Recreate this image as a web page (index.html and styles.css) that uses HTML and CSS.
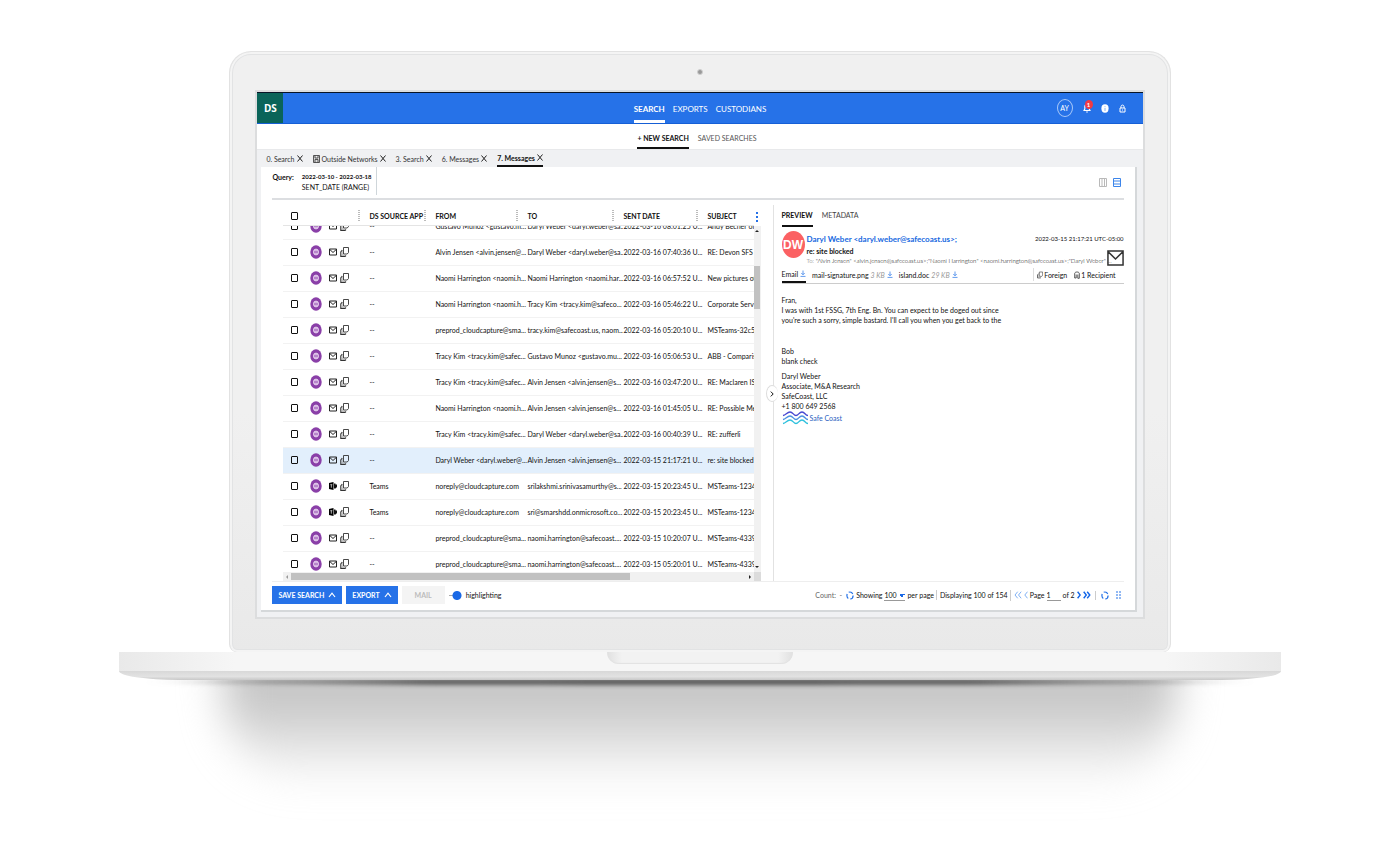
FILE: index.html
```html
<!DOCTYPE html>
<html lang="en">
<head>
<meta charset="utf-8">
<title>DS Search</title>
<link rel="stylesheet" href="styles.css">
</head>
<body>
<svg class="sprite" aria-hidden="true">
  <symbol id="i-x" viewBox="0 0 6 7"><path d="M.5 .5 5.5 6.5M5.5 .5.5 6.5" fill="none" stroke="#222" stroke-width="1"/></symbol>
  <symbol id="i-badge" viewBox="0 0 12 14"><ellipse cx="6" cy="7" rx="5.7" ry="6.7" fill="#8a3fa8"/><ellipse cx="6" cy="7" rx="2.6" ry="3" fill="#d5b3e2" stroke="#efdff5" stroke-width=".7"/><path d="M4 7h4" stroke="#8a3fa8" stroke-width=".8"/></symbol>
  <symbol id="i-mail" viewBox="0 0 18 16"><path d="M1 1h16v14H1zM1.500 2 9 9l7.500-7" fill="none" stroke="currentColor" stroke-width="1.600"/></symbol>
  <symbol id="i-smallmail" viewBox="0 0 8 8"><path d="M.5 1h7v6h-7zM.8 1.500 4 4.500l3.200-3" fill="none" stroke="#222" stroke-width="1"/></symbol>
  <symbol id="i-teams" viewBox="0 0 8 8"><path d="M0 1 4.500 0v8L0 7z" fill="#000"/><path d="M5 1.500h1.500v1H8V5L6.500 6.500H5z" fill="#111"/><path d="M1.300 2.700h2M2.300 2.700v3" stroke="#fff" stroke-width=".7"/></symbol>
  <symbol id="i-copy" viewBox="0 0 9 10"><path d="M3.500.500h5v5L7.200 7H3.500z" fill="none" stroke="#333" stroke-width=".9"/><path d="M2.300 3 .8 5v4.400h4.200L6 8.500" fill="none" stroke="#333" stroke-width="1.100"/><path d="M2.300 3v5h3.500" fill="none" stroke="#999" stroke-width=".6"/></symbol>
  <symbol id="i-up" viewBox="0 0 8 6"><path d="M1 5 4 1.200 7 5" fill="none" stroke="#fff" stroke-width="1.200"/></symbol>
  <symbol id="i-dl" viewBox="0 0 6 7"><path d="M3 .5v4M1.300 3 3 4.800 4.700 3M.5 6.400h5" fill="none" stroke="#3b82e8" stroke-width=".8"/></symbol>
  <symbol id="i-sync" viewBox="0 0 8 9"><ellipse cx="4" cy="4.500" rx="3.100" ry="3.500" fill="none" stroke="#2472e8" stroke-width="1.200" stroke-dasharray="4.800 2.100"/></symbol>
</svg>
<main class="stage">
<div class="laptop">
  <div class="lid">
    <span class="camera"></span>
    <div class="screen">
      <header class="topbar">
        <a class="brand" href="#">DS</a>
        <nav class="mainnav"><a class="on" href="#">SEARCH</a><a href="#">EXPORTS</a><a href="#">CUSTODIANS</a></nav>
        <div class="tools">
          <button class="user">AY</button>
          <button class="bell" aria-label="Notifications"><svg width="8" height="10" viewBox="0 0 8 10"><path d="M1 7.500h6L6.200 6V3.500C6.200 2 5 1.200 4 1.200S1.800 2 1.800 3.500V6zM3.200 9h1.600" fill="none" stroke="#fff" stroke-width="1.100"/></svg><span class="count">1</span></button>
          <button aria-label="Help"><svg width="8" height="9" viewBox="0 0 8 9"><ellipse cx="4" cy="4.500" rx="3.600" ry="4.200" fill="#fff"/><path d="M4 2.200v1M4 4v3" stroke="#8ab4f4"/></svg></button>
          <button aria-label="Lock"><svg width="7" height="9" viewBox="0 0 7 9"><path d="M1 4h5v4H1zM2 4V2.500C2 .6 5 .6 5 2.500V4M3.500 5.500v1" fill="none" stroke="#fff"/></svg></button>
        </div>
      </header>
      <nav class="subnav"><a class="on" href="#">+ NEW SEARCH</a><a href="#">SAVED SEARCHES</a></nav>
      <div class="tabs">
        <a href="#">0. Search <svg width="6" height="7"><use href="#i-x"/></svg></a>
        <a href="#"><svg width="7" height="8" viewBox="0 0 7 8"><path d="M.5.5h6v7h-6zM2 .5v2.500h3V.5M2 7.500v-3h3v3" fill="#ddd" stroke="#333" stroke-width=".8"/></svg> Outside Networks <svg width="6" height="7"><use href="#i-x"/></svg></a>
        <a href="#">3. Search <svg width="6" height="7"><use href="#i-x"/></svg></a>
        <a href="#">6. Messages <svg width="6" height="7"><use href="#i-x"/></svg></a>
        <a href="#" class="on">7. Messages <svg width="6" height="7"><use href="#i-x"/></svg></a>
      </div>
      <section class="panel">
        <div class="query">
          <strong class="qlabel">Query:</strong>
          <div class="qterm"><b>2022-03-10 - 2022-03-18</b><span>SENT_DATE (RANGE)</span></div>
          <div class="views">
            <button aria-label="Column view"><svg width="8" height="9" viewBox="0 0 8 9"><path d="M.5.5h7v8h-7zM3 .5v8M5.500.5v8" fill="none" stroke="#b9b9b9"/></svg></button>
            <button aria-label="Row view"><svg width="8" height="9" viewBox="0 0 8 9"><path d="M.5.5h7v8h-7zM.5 3h7M.5 6h7" fill="none" stroke="#3c85ea"/></svg></button>
          </div>
        </div>
        <div class="split">
          <div class="results">
            <table class="grid head">
              <colgroup><col class="c-icons"><col class="c-app"><col class="c-from"><col class="c-to"><col class="c-date"><col></colgroup>
              <thead><tr><th><input type="checkbox" aria-label="Select all"></th><th>DS SOURCE APP</th><th>FROM</th><th>TO</th><th>SENT DATE</th><th>SUBJECT</th></tr></thead>
            </table>
            <button class="kebab" aria-label="Columns"><i></i><i></i><i></i></button>
            <div class="scroller">
              <table class="grid body">
                <colgroup><col class="c-icons"><col class="c-app"><col class="c-from"><col class="c-to"><col class="c-date"><col></colgroup>
                <tbody id="rows"></tbody>
              </table>
            </div>
            <div class="vbar"><span class="tri up"></span><span class="thumb"></span><span class="tri down"></span></div>
            <div class="hbar"><span class="tri left"></span><span class="thumb"></span><span class="tri right"></span></div>
          </div>
          <article class="preview">
            <button class="handle" aria-label="Collapse"><svg width="4" height="6" viewBox="0 0 4 6"><path d="M.8.600 3.200 3 .8 5.400" fill="none" stroke="#111"/></svg></button>
            <nav class="ptabs"><a class="on" href="#">PREVIEW</a><a href="#">METADATA</a></nav>
            <div class="mailhead">
              <span class="avatar">DW</span>
              <div class="who">
                <div class="line1"><a class="sender" href="#">Daryl Weber &lt;daryl.weber@safecoast.us&gt;;</a><time>2022-03-15 21:17:21 UTC-05:00</time></div>
                <b class="subj">re: site blocked</b>
                <div class="to"><span>To:</span> "Alvin Jensen" &lt;alvin.jensen@safecoast.us&gt;;"Naomi Harrington" &lt;naomi.harrington@safecoast.us&gt;;"Daryl Weber" ...</div>
              </div>
              <svg class="envelope" width="17" height="16" viewBox="0 0 18 16" preserveAspectRatio="none"><use href="#i-mail"/></svg>
            </div>
            <div class="attach">
              <a class="on" href="#">Email <svg width="6" height="7"><use href="#i-dl"/></svg></a>
              <a href="#">mail-signature.png <i>3 KB</i> <svg width="6" height="7"><use href="#i-dl"/></svg></a>
              <a href="#">island.doc <i>29 KB</i> <svg width="6" height="7"><use href="#i-dl"/></svg></a>
              <div class="flags"><span><svg width="6" height="8"><use href="#i-copy"/></svg>Foreign</span><span><svg width="6" height="8" viewBox="0 0 6 8"><path d="M.7 7V2.500C.7.500 5.300.500 5.300 2.500V7.300H3.800V3.500M.7 7h1.500V3.500" fill="none" stroke="#333" stroke-width=".8"/></svg>1 Recipient</span></div>
            </div>
            <div class="message">
              <p>Fran,<br>I was with 1st FSSG, 7th Eng. Bn. You can expect to be doged out since<br>you're such a sorry, simple bastard. I'll call you when you get back to the</p>
              <p class="sign">Bob<br>blank check</p>
              <p>Daryl Weber<br>Associate, M&amp;A Research<br>SafeCoast, LLC<br>+1 800 649 2568</p>
              <div class="coast"><svg width="27" height="14" viewBox="0 0 27 14" fill="none" stroke-width="1.300"><path d="M1 4.500C4 4 5 1 8 1s3.500 3.500 6 3.500S17 1 20 1s3 3.500 6 3.500" stroke="#4747d1"/><path d="M1 8.500C4 8 5 5 8 5s3.500 3.500 6 3.500S17 5 20 5s3 3.500 6 3.500" stroke="#4a90e0"/><path d="M1 12.500C4 12 5 9 8 9s3.500 3.500 6 3.500S17 9 20 9s3 3.500 6 3.500" stroke="#2fc1dd"/></svg><span>Safe Coast</span></div>
            </div>
          </article>
        </div>
        <footer class="actions">
          <button class="primary">SAVE SEARCH <svg width="8" height="6"><use href="#i-up"/></svg></button>
          <button class="primary">EXPORT <svg width="8" height="6"><use href="#i-up"/></svg></button>
          <button class="ghost" disabled>MAIL</button>
          <label class="switch"><input type="checkbox" checked>highlighting</label>
          <div class="pager">
            <span class="muted">Count: &nbsp;-</span>
            <svg width="8" height="9"><use href="#i-sync"/></svg>
            <label>Showing <select><option>100</option></select></label><span>per page</span>
            <span class="bar">Displaying 100 of 154</span>
            <span class="bar nav">
              <button aria-label="First"><svg width="8" height="8" viewBox="0 0 8 8"><path d="M3.700.7 1 4l2.700 3.300M7.200.7 4.500 4l2.700 3.300" fill="none" stroke="#7fb0f3"/></svg></button>
              <button aria-label="Previous"><svg width="4" height="8" viewBox="0 0 4 8"><path d="M3.500.7.8 4l2.700 3.300" fill="none" stroke="#7fb0f3"/></svg></button>
              <label>Page <input class="pageno" type="text" value="1"></label><span>of 2</span>
              <button aria-label="Next"><svg width="4" height="8" viewBox="0 0 4 8"><path d="M.6.7 3.200 4 .6 7.300" fill="none" stroke="#1265e8" stroke-width="1.400"/></svg></button>
              <button aria-label="Last"><svg width="8" height="8" viewBox="0 0 8 8"><path d="M.7.700 3.300 4 .7 7.300M4.200.7 6.800 4 4.200 7.300" fill="none" stroke="#1265e8" stroke-width="1.400"/></svg></button>
            </span>
            <span class="bar nav end"><button aria-label="Refresh"><svg width="8" height="9"><use href="#i-sync"/></svg></button><button aria-label="Layout"><svg width="5" height="8" viewBox="0 0 5 8"><path d="M0 1h2M3 1h2M0 4h2M3 4h2M0 7h2M3 7h2" stroke="#2472e8"/></svg></button></span>
          </div>
        </footer>
      </section>
    </div>
  </div>
  <div class="base"><span class="notch"></span></div>
  <div class="under"></div>
  <div class="shadow"><span class="contact"></span><span class="cast"></span></div>
</div>
</main>
<script src="rows.js"></script>
</body>
</html>
```
FILE: styles.css
```css
:root {
  --blue: #2672e8;
  --ink: #111;
}
* { box-sizing: border-box; }
body {
  margin: 0;
  background: #fff;
  color: var(--ink);
  font: 7px/10px Lato, sans-serif;
}
a { color: inherit; text-decoration: none; }
button, input, select { font: inherit; color: inherit; margin: 0; padding: 0; border: 0; background: none; }
svg { flex: none; }
.sprite { display: none; }
.stage { padding-top: 51px; overflow: hidden; }
.laptop { width: 83%; margin: 0 auto; }
.lid {
  display: flex;
  flex-direction: column;
  width: 81%;
  margin: 0 auto;
  padding: 17px 25px 33px;
  border: 1px solid #e2e2e2;
  border-bottom: 0;
  border-radius: 22px 22px 8px 8px;
  background: linear-gradient(#f0f0f0 60%, #e9e9e9);
  box-shadow: inset 0 0 0 2px #f4f4f4, inset 0 0 0 3px #e2e3e4;
}
.camera { align-self: center; width: 6px; height: 6px; margin-bottom: 15px; border: 1px solid #cfcfcf; border-radius: 50%; background: #999; }
.screen { border: 2px solid #dcddde; background: #f0f1f3; }

.topbar {
  display: grid;
  grid-template-columns: 1fr auto 1fr;
  height: 32px;
  border-top: 1px solid #071426;
  border-bottom: 1px solid #155fd6;
  background: var(--blue);
  color: #fff;
}
.brand { display: grid; place-items: center; width: 26px; background: #0a6459; font: bold 10px/14px "Open Sans", sans-serif; }
.mainnav { display: flex; gap: 8px; }
.mainnav a { padding-top: 11px; font-size: 8px; }
.mainnav .on { border-bottom: 3px solid #fff; font-weight: bold; }
.tools { display: flex; align-items: center; justify-content: flex-end; gap: 10px; padding-right: 17px; }
.tools button { display: flex; }
.tools .user { align-items: center; justify-content: center; width: 16px; height: 18px; border: 1px solid #a8c8f8; border-radius: 50%; }
.bell { position: relative; }
.bell .count { position: absolute; top: -3px; right: -2px; width: 8px; height: 9px; border-radius: 50%; background: #f23a44; font: bold 6px/9px Lato, sans-serif; text-align: center; }
.subnav { display: flex; justify-content: center; gap: 9px; height: 26px; padding-right: 6px; border-bottom: 1px solid #e8e9eb; background: #fff; color: #555; }
.subnav a { padding-top: 9px; }
.subnav .on { border-bottom: 2px solid #111; color: #111; font-weight: bold; }
.tabs { display: flex; gap: 10px; height: 17px; padding-left: 9px; color: #333; }
.tabs a { display: flex; align-items: center; gap: 2px; }
.tabs .on { border-bottom: 2px solid #111; color: #111; font-weight: bold; }

.panel { margin: 0 6px 5px 4px; padding: 0 11px; border-right: 2px solid #d5d8da; border-bottom: 2px solid #d5d8da; background: #fff; }
.query { display: flex; height: 33px; border-bottom: 2px solid #dcdee1; color: #111; }
.qlabel { padding-top: 5px; margin-right: 8px; }
.qterm { display: flex; flex-direction: column; height: 28px; padding: 5px 4px 0 0; border-right: 1px solid #cfd6da; }
.qterm b { font-size: 6px; }
.views { display: flex; align-items: center; gap: 6px; margin-left: auto; padding-right: 3px; }
.views button { display: flex; }

.split { display: grid; grid-template-columns: minmax(0, 500fr) minmax(0, 351fr); border-bottom: 1px solid #eee; }
.results { display: grid; grid-template-columns: minmax(0, 1fr) 7px; grid-template-rows: 26px 346px 9px; padding: 0 12px 0 11px; }
.grid { width: 100%; table-layout: fixed; border-collapse: collapse; }
.c-icons { width: 86px; }
.c-app { width: 66px; }
.c-from { width: 92px; }
.c-to { width: 96px; }
.c-date { width: 84px; }
.grid th, .grid td { padding: 0; overflow: hidden; text-align: left; white-space: nowrap; }
.grid td { height: 26px; border-bottom: 1px solid #f2f2f2; }
.head { height: 26px; border-bottom: 1px solid #e4e4e4; color: #111; }
.head th { padding-top: 6px; }
.head th:not(:last-child) { background: repeating-linear-gradient(#bbb 0 1px, #fff 1px 2px) right 9px top 10px / 2px 12px no-repeat; }
.grid input { display: block; width: 7px; height: 8px; margin-left: 8px; appearance: none; border: 1px solid #111; border-radius: 1px; }
.scroller { overflow: hidden; }
.body { margin-top: -13px; }
.body .picked { background: #e2effc; }
.icons { display: flex; align-items: center; }
.icons .badge { margin: 0 7px 0 12px; }
.icons .kind { margin-right: 3px; }
.kebab { display: flex; flex-direction: column; align-items: center; gap: 2px; padding-top: 12px; }
.kebab i { width: 2px; height: 2px; background: var(--blue); }
.vbar { display: flex; flex-direction: column; align-items: center; justify-content: space-between; padding: 4px 0; background: #f1f1f1; }
.vbar .thumb { width: 6px; height: 43px; margin: 34px 0 auto; background: #c1c1c1; }
.hbar { display: flex; grid-column: 1 / 3; align-items: center; padding: 0 3px; border-right: 7px solid #dcdcdc; background: #f1f1f1; }
.hbar .thumb { width: 73%; height: 7px; margin: 0 auto 0 3px; background: #c1c1c1; }
.tri { border: 2px solid transparent; }
.tri.up { border-top: 0; border-bottom-color: #222; }
.tri.down { border-bottom: 0; border-top-color: #222; }
.tri.left { border-left: 0; border-right-color: #999; }
.tri.right { border-right: 0; border-left-color: #222; }

.preview { position: relative; margin-top: 5px; padding-left: 8px; border-left: 1px solid #e2e2e2; }
.handle { position: absolute; top: 48%; left: -8px; display: grid; place-items: center; width: 12px; height: 17px; border: 1px solid #ddd; border-right: 0; border-radius: 50%; background: #fff; }
.ptabs { display: flex; gap: 9px; height: 22px; color: #444; }
.ptabs a { padding-top: 5px; }
.ptabs .on { border-bottom: 2px solid #111; color: #111; font-weight: bold; }
.mailhead { display: flex; gap: 2px; margin-top: 4px; }
.avatar { flex: none; display: grid; place-items: center; width: 23px; height: 27px; border-radius: 50%; background: #fb6163; color: #fff; font: bold 12px/14px "Liberation Sans", sans-serif; }
.who { flex: 1; min-width: 0; }
.line1 { display: flex; align-items: center; justify-content: space-between; height: 15px; margin-right: -19px; }
.line1 time { font-size: 6px; }
.sender { color: #1668e0; font-weight: bold; font-size: 8px; }
.subj { display: block; color: #111; }
.to { font-size: 6px; font-weight: 300; white-space: nowrap; color: #000; }
.to span { color: #666; }
.envelope { align-self: flex-end; color: #333; }
.attach { display: flex; gap: 6px; height: 18px; border-bottom: 1px solid #ccc; white-space: nowrap; }
.attach a { display: flex; align-items: center; gap: 2px; }
.attach .on { border-bottom: 2px solid #111; }
.attach i { color: #999; }
.flags { display: flex; align-items: center; gap: 7px; margin: 2px 8px 2px auto; padding-left: 3px; border-left: 1px solid #ddd; }
.flags span { display: flex; align-items: center; gap: 1px; }
.message { padding-top: 11px; }
.message p { margin: 0 0 5px; }
.message .sign { margin-top: 21px; }
.coast { display: flex; align-items: center; gap: 1px; margin-top: -5px; color: #2b5fc0; }

.actions { display: flex; align-items: center; gap: 4px; height: 28px; padding-bottom: 2px; white-space: nowrap; }
.actions .primary, .actions .ghost { display: flex; align-items: center; justify-content: center; gap: 4px; height: 18px; padding: 0 6px; background: var(--blue); color: #fff; font-weight: bold; }
.actions .ghost { width: 43px; background: #f4f4f4; color: #bbb; }
.switch { display: flex; align-items: center; gap: 4px; }
.switch input { width: 13px; height: 9px; appearance: none; background: radial-gradient(circle at 8px 50%, #1a69e6 4px, transparent 5px), linear-gradient(#aaa, #aaa) 0 50% / 6px 1px no-repeat; }
.pager { display: flex; align-items: center; gap: 2px; margin-left: auto; }
.pager label, .nav { display: flex; align-items: center; gap: 2px; }
.pager button { display: flex; }
.muted { margin-right: 2px; color: #666; }
.pager select { width: 21px; height: 11px; appearance: none; border-bottom: 1px solid #999; border-radius: 0; background: linear-gradient(45deg, transparent 50%, #1a69e6 50%) 15px 4px / 3px 3px no-repeat, linear-gradient(-45deg, transparent 50%, #1a69e6 50%) 18px 4px / 3px 3px no-repeat; }
.bar { padding-left: 3px; border-left: 1px solid #ccc; }
.pageno { width: 14px; height: 11px; border-bottom: 1px solid #999; border-radius: 0; }
.end { gap: 7px; padding: 0 3px 0 5px; margin-left: 2px; }

.base { display: flex; justify-content: center; height: 19px; background: linear-gradient(90deg, #e9e9e9, #f6f6f6 10%, #f6f6f6 90%, #e9e9e9); }
.notch { width: 16%; height: 12px; border-radius: 0 0 12px 12px; background: linear-gradient(90deg, #e0e0e0, #f2f2f2 8%, #f2f2f2 92%, #e0e0e0); box-shadow: inset 0 -1px 1px #e2e2e2; }
.under { height: 9px; border-radius: 0 0 60px 60px / 0 0 9px 9px; background: linear-gradient(#d8d8d8, #e2e2e2 60%, #c8c8c8); }
.shadow { position: relative; height: 170px; overflow: hidden; }
.cast { position: absolute; top: -50px; left: 9%; right: 9%; height: 155px; border-radius: 0 0 90px 90px; background: linear-gradient(#c6c6c6 45%, #fff0); filter: blur(20px); }
.contact { position: absolute; z-index: 1; top: -1px; left: 2%; right: 2%; height: 6px; border-radius: 50%; background: linear-gradient(90deg, transparent, #555 25%, #555 75%, transparent); filter: blur(2px); }
```
FILE: rows.js
```js
const rows = [
  ["smallmail", "--", "Gustavo Munoz <gustavo.m...", "Daryl Weber <daryl.weber@sa...", "2022-03-16 08:01:25 U...", "Andy Becher on"],
  ["smallmail", "--", "Alvin Jensen <alvin.jensen@...", "Daryl Weber <daryl.weber@sa...", "2022-03-16 07:40:36 U...", "RE: Devon SFS o"],
  ["smallmail", "--", "Naomi Harrington <naomi.h...", "Naomi Harrington <naomi.har...", "2022-03-16 06:57:52 U...", "New pictures of"],
  ["smallmail", "--", "Naomi Harrington <naomi.h...", "Tracy Kim <tracy.kim@safeco...", "2022-03-16 05:46:22 U...", "Corporate Servi"],
  ["smallmail", "--", "preprod_cloudcapture@sma...", "tracy.kim@safecoast.us, naom...", "2022-03-16 05:20:10 U...", "MSTeams-32c5"],
  ["smallmail", "--", "Tracy Kim <tracy.kim@safec...", "Gustavo Munoz <gustavo.mu...", "2022-03-16 05:06:53 U...", "ABB - Comparis"],
  ["smallmail", "--", "Tracy Kim <tracy.kim@safec...", "Alvin Jensen <alvin.jensen@s...", "2022-03-16 03:47:20 U...", "RE: Maclaren ISI"],
  ["smallmail", "--", "Naomi Harrington <naomi.h...", "Alvin Jensen <alvin.jensen@s...", "2022-03-16 01:45:05 U...", "RE: Possible Me"],
  ["smallmail", "--", "Tracy Kim <tracy.kim@safec...", "Daryl Weber <daryl.weber@sa...", "2022-03-16 00:40:39 U...", "RE: zufferli"],
  ["smallmail", "--", "Daryl Weber <daryl.weber@...", "Alvin Jensen <alvin.jensen@s...", "2022-03-15 21:17:21 U...", "re: site blocked"],
  ["teams", "Teams", "noreply@cloudcapture.com", "srilakshmi.srinivasamurthy@s...", "2022-03-15 20:23:45 U...", "MSTeams-1234"],
  ["teams", "Teams", "noreply@cloudcapture.com", "sri@smarshdd.onmicrosoft.co...", "2022-03-15 20:23:45 U...", "MSTeams-1234"],
  ["smallmail", "--", "preprod_cloudcapture@sma...", "naomi.harrington@safecoast....", "2022-03-15 10:20:07 U...", "MSTeams-4339"],
  ["smallmail", "--", "preprod_cloudcapture@sma...", "naomi.harrington@safecoast....", "2022-03-15 05:20:01 U...", "MSTeams-4339"]
];
const selected = 9;
const icon = (id, cls, w, h) => `<svg class="${cls}" width="${w}" height="${h}"><use href="#i-${id}"/></svg>`;
const body = document.getElementById("rows");
rows.forEach(([kind, ...cells], n) => {
  const tr = body.insertRow();
  if (n === selected) tr.className = "picked";
  tr.insertCell().innerHTML = `<div class="icons"><input type="checkbox" aria-label="Select message">${icon("badge", "badge", 12, 14)}${icon(kind, "kind", 8, 8)}${icon("copy", "copy", 9, 10)}</div>`;
  cells.forEach(text => { tr.insertCell().textContent = text; });
});
```
